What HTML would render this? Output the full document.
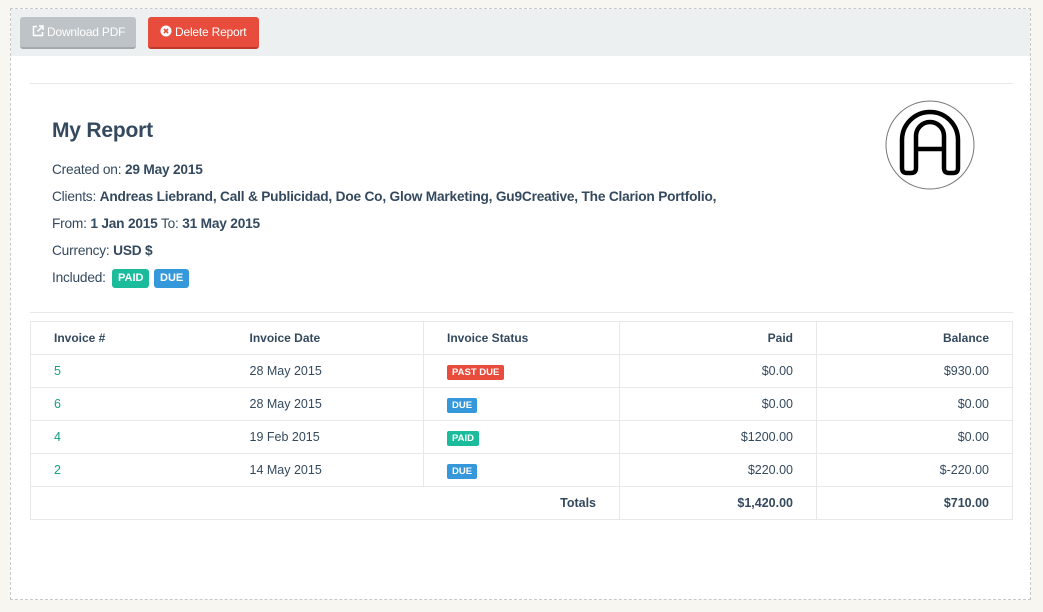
<!DOCTYPE html>
<html><head><style>
*{margin:0;padding:0;box-sizing:border-box}
body{width:1043px;height:612px;background:#f8f6f0;font-family:"Liberation Sans",sans-serif;color:#34495e;position:relative;overflow:hidden}
.wrap{position:absolute;left:10px;top:8px;width:1021px;height:592px;border:1px dashed #c8c8c8;background:#fff}
.bar{position:absolute;left:0;top:0;width:1019px;height:47px;background:#ecf0f1}
.btn{position:absolute;top:8px;height:32px;border-radius:3px;color:#fff;font-size:12px;line-height:31px;padding-left:12px;letter-spacing:-0.2px}
.b1{left:9px;width:116px;background:#bdc3c7;border-bottom:2px solid #a3a9ad}
.b2{left:137px;width:111px;background:#e74c3c;border-bottom:2px solid #c0392b}
.hr{position:absolute;left:19px;width:983px;height:1px;background:#e8e8e8}
.t{position:absolute;font-size:13.7px;white-space:nowrap;letter-spacing:-0.2px}
.lab{position:absolute;font-size:11px;color:#fff;border-radius:3px;padding:0 6px;height:19px;line-height:19px;font-weight:bold}
table{position:absolute;left:19px;top:312px;width:983px;border-collapse:collapse;font-size:12.5px}
td{height:33px;border:1px solid #e8e8e8;padding:0 23px;white-space:nowrap}
td.nl{border-left:none}td.nr{border-right:none}
.r{text-align:right}
a{color:#16a085;text-decoration:none}
.sl{font-size:9.5px;color:#fff;border-radius:2px;padding:2px 5px;font-weight:bold}
</style></head><body>
<div class="wrap">
<div class="bar">
<div class="btn b1"><svg width="12" height="12" viewBox="0 0 12 12" style="vertical-align:-1px;margin-right:3px"><path d="M5 1.5H1.5v9h9V7" fill="none" stroke="#fff" stroke-width="1.5"/><path d="M7 1h4v4M11 1L5.5 6.5" fill="none" stroke="#fff" stroke-width="1.5"/></svg>Download PDF</div>
<div class="btn b2"><svg width="12" height="12" viewBox="0 0 12 12" style="vertical-align:-1px;margin-right:3px"><circle cx="6" cy="6" r="5.5" fill="#fff"/><path d="M4 4l4 4M8 4L4 8" stroke="#e74c3c" stroke-width="1.6"/></svg>Delete Report</div>
</div>
<div class="hr" style="top:74px"></div>
<div class="t" style="left:41px;top:110px;font-size:21px;font-weight:bold">My Report</div>
<div class="t" style="left:41px;top:153px">Created on: <b>29 May 2015</b></div>
<div class="t" style="left:41px;top:180px">Clients: <b>Andreas Liebrand, Call &amp; Publicidad, Doe Co, Glow Marketing, Gu9Creative, The Clarion Portfolio,</b></div>
<div class="t" style="left:41px;top:207px">From: <b>1 Jan 2015</b> To: <b>31 May 2015</b></div>
<div class="t" style="left:41px;top:234px">Currency: <b>USD $</b></div>
<div class="t" style="left:41px;top:261px">Included:</div>
<div class="lab" style="left:101px;top:260px;background:#1abc9c">PAID</div>
<div class="lab" style="left:143px;top:260px;background:#3498db">DUE</div>
<svg style="position:absolute;left:874px;top:91px" width="90" height="90" viewBox="0 0 90 90"><circle cx="45" cy="45" r="44" fill="#fff" stroke="#777" stroke-width="1"/>
<path d="M17 68V40A28 28 0 0 1 73 40V68Q73 73 68 73H64Q59 73 59 68V36A14 14 0 0 0 31 36V68Q31 73 26 73H22Q17 73 17 68Z" fill="none" stroke="#000" stroke-width="4.5" stroke-linejoin="round"/>
<path d="M31 49H59" stroke="#000" stroke-width="4.5"/></svg>
<div class="hr" style="top:303px"></div>
<table>
<tr style="font-weight:bold;font-size:12px"><td class="nr" style="width:196px">Invoice #</td><td class="nl" style="width:197px">Invoice Date</td><td style="width:196px">Invoice Status</td><td class="r" style="width:197px">Paid</td><td class="r">Balance</td></tr>
<tr><td class="nr"><a>5</a></td><td class="nl">28 May 2015</td><td><span class="sl" style="background:#e74c3c">PAST DUE</span></td><td class="r">$0.00</td><td class="r">$930.00</td></tr>
<tr><td class="nr"><a>6</a></td><td class="nl">28 May 2015</td><td><span class="sl" style="background:#3498db">DUE</span></td><td class="r">$0.00</td><td class="r">$0.00</td></tr>
<tr><td class="nr"><a>4</a></td><td class="nl">19 Feb 2015</td><td><span class="sl" style="background:#1abc9c">PAID</span></td><td class="r">$1200.00</td><td class="r">$0.00</td></tr>
<tr><td class="nr"><a>2</a></td><td class="nl">14 May 2015</td><td><span class="sl" style="background:#3498db">DUE</span></td><td class="r">$220.00</td><td class="r">$-220.00</td></tr>
<tr style="font-weight:bold"><td colspan="3" class="r">Totals</td><td class="r">$1,420.00</td><td class="r">$710.00</td></tr>
</table>
</div>
</body></html>
